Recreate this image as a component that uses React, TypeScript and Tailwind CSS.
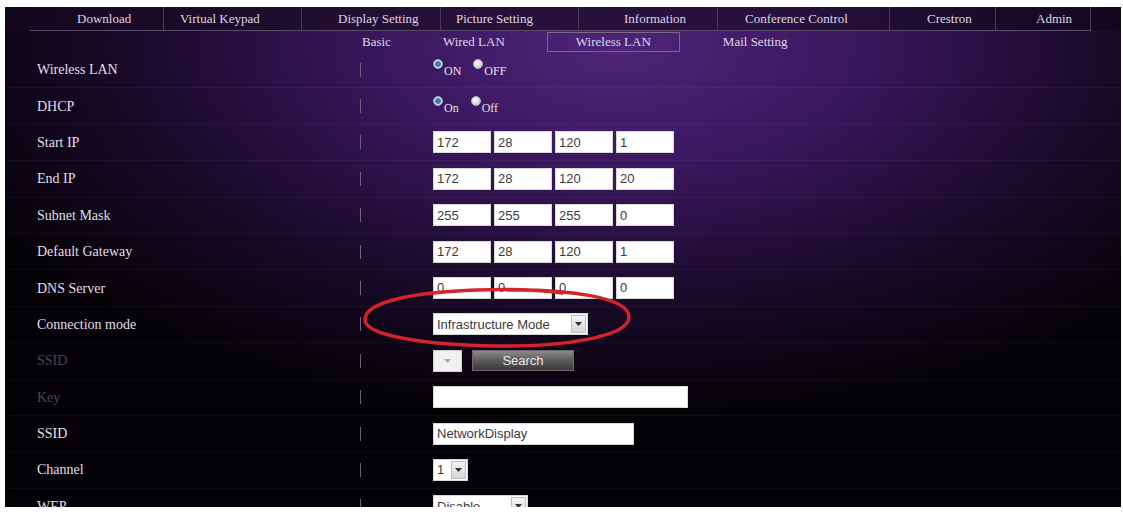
import React from "react";

const serif = { fontFamily: '"Liberation Serif", "Times New Roman", serif' };
const sans = { fontFamily: '"Liberation Sans", Arial, sans-serif' };

const navCells: { label: string; w: string; pl: string }[] = [
  { label: "Download", w: "w-[159px]", pl: "pl-[72px]" },
  { label: "Virtual Keypad", w: "w-[138px]", pl: "pl-[16px]" },
  { label: "Display Setting", w: "w-[139px]", pl: "pl-[36px]" },
  { label: "Picture Setting", w: "w-[138px]", pl: "pl-[15px]" },
  { label: "Information", w: "w-[139px]", pl: "pl-[45px]" },
  { label: "Conference Control", w: "w-[172px]", pl: "pl-[27px]" },
  { label: "Crestron", w: "w-[106px]", pl: "pl-[37px]" },
  { label: "Admin", w: "w-[95px]", pl: "pl-[40px]" },
];

function Radio({ on }: { on: boolean }) {
  return (
    <span
      className={
        on
          ? "inline-block w-[10px] h-[10px] rounded-full border border-[#9ab] bg-[radial-gradient(circle_at_50%_50%,#2d6f8c_0%,#4b8aa6_45%,#cfe0ea_60%,#e8eef2_100%)]"
          : "inline-block w-[10px] h-[10px] rounded-full border border-[#bbb] bg-[radial-gradient(circle_at_40%_35%,#ffffff_0%,#d8d8d8_60%,#b0b0b0_100%)]"
      }
    />
  );
}

function RadioPair({ a, b }: { a: string; b: string }) {
  return (
    <div className="flex items-end gap-[12px] text-[#e6e0ee] text-[12px]" style={serif}>
      <span className="flex items-start gap-[1px]">
        <Radio on />
        <span className="mt-[3px]">{a}</span>
      </span>
      <span className="flex items-start gap-[1px]">
        <Radio on={false} />
        <span className="mt-[3px]">{b}</span>
      </span>
    </div>
  );
}

function TextBox({ value, w }: { value: string; w: string }) {
  return (
    <div
      className={`${w} h-[22px] bg-white border border-[#d8d8d8] flex items-center pl-[3px] text-[13px] text-[#3a3a3a]`}
      style={sans}
    >
      {value}
    </div>
  );
}

function IpBoxes({ parts }: { parts: string[] }) {
  return (
    <div className="flex items-center gap-[3px]">
      {parts.map((p, i) => (
        <TextBox key={i} value={p} w="w-[58px]" />
      ))}
    </div>
  );
}

function Arrow() {
  return (
    <span className="w-[15px] h-[18px] bg-[linear-gradient(#f4f4f4,#d6d6d6)] border border-[#bdbdbd] flex items-center justify-center">
      <svg width="7" height="4" viewBox="0 0 7 4">
        <path d="M0 0 L7 0 L3.5 4 Z" fill="#333" />
      </svg>
    </span>
  );
}

function Select({ value, w }: { value: string; w: string }) {
  return (
    <div
      className={`${w} h-[22px] bg-white border border-[#d8d8d8] flex items-center justify-between pl-[3px] pr-[1px] text-[13px] text-[#3a3a3a]`}
      style={sans}
    >
      <span>{value}</span>
      <Arrow />
    </div>
  );
}

type Row = { label: string; dim?: boolean; field: React.ReactNode };

const rows: Row[] = [
  { label: "Wireless LAN", field: <RadioPair a="ON" b="OFF" /> },
  { label: "DHCP", field: <RadioPair a="On" b="Off" /> },
  { label: "Start IP", field: <IpBoxes parts={["172", "28", "120", "1"]} /> },
  { label: "End IP", field: <IpBoxes parts={["172", "28", "120", "20"]} /> },
  { label: "Subnet Mask", field: <IpBoxes parts={["255", "255", "255", "0"]} /> },
  { label: "Default Gateway", field: <IpBoxes parts={["172", "28", "120", "1"]} /> },
  { label: "DNS Server", field: <IpBoxes parts={["0", "0", "0", "0"]} /> },
  { label: "Connection mode", field: <Select value="Infrastructure Mode" w="w-[155px]" /> },
  {
    label: "SSID",
    dim: true,
    field: (
      <div className="flex items-center gap-[10px]">
        <div className="w-[29px] h-[22px] bg-[#f1f1f1] border border-[#d0d0d0] flex items-center justify-center">
          <svg width="7" height="4" viewBox="0 0 7 4">
            <path d="M0 0 L7 0 L3.5 4 Z" fill="#aaa" />
          </svg>
        </div>
        <div
          className="w-[102px] h-[21px] bg-[linear-gradient(#8a8a8a,#5b5b5b_50%,#3a3a3a)] border border-[#6a6a6a] flex items-center justify-center text-[13px] text-[#e8e8e8]"
          style={sans}
        >
          Search
        </div>
      </div>
    ),
  },
  { label: "Key", dim: true, field: <TextBox value="" w="w-[255px]" /> },
  { label: "SSID", field: <TextBox value="NetworkDisplay" w="w-[201px]" /> },
  { label: "Channel", field: <Select value="1" w="w-[35px]" /> },
  { label: "WEP", field: <Select value="Disable" w="w-[95px]" /> },
];

export default function App() {
  return (
    <div className="w-[1123px] h-[512px] bg-white pt-[7px] pl-[5px] pr-[2px] pb-[5px]">
      <div className="relative w-full h-full overflow-hidden bg-[radial-gradient(ellipse_70%_80%_at_55%_8%,#4f2478_0%,#3a175e_30%,#1a0a2b_62%,#050207_92%)]">
        {/* main menu */}
        <div className="flex h-[23px] items-center bg-[linear-gradient(90deg,#12071c,#261039_40%,#281040_70%,#12071c)] text-[13px] text-[#ddd6e6]" style={serif}>
          {navCells.map((c) => (
            <div key={c.label} className={`${c.w} ${c.pl} h-full flex items-center border-r border-[#4a3a5a] whitespace-nowrap`}>
              {c.label}
            </div>
          ))}
          <div className="flex-1" />
        </div>

        {/* sub tabs */}
        <div className="ml-[25px] mr-[30px] h-[22px] border-t border-[#5a4a6a] text-[13px] text-[#ddd6e6]" style={serif}>
          <div className="flex h-full items-center">
            <span className="ml-[332px]">Basic</span>
            <span className="ml-[52px]">Wired LAN</span>
            <span className="ml-[42px] h-[20px] w-[133px] border border-[#7a6a8a] flex items-center justify-center mt-[1px]">
              Wireless LAN
            </span>
            <span className="ml-[43px]">Mail Setting</span>
          </div>
        </div>

        {/* settings rows */}
        <div>
          {rows.map((r, i) => (
            <div key={i} className="h-[36.4px] flex items-center border-b border-[#ffffff0a]">
              <div
                className={`w-[355px] pl-[32px] text-[14px] whitespace-nowrap ${r.dim ? "text-[#4c4452]" : "text-[#e4dfe9]"}`}
                style={serif}
              >
                {r.label}
              </div>
              <div className="w-[1px] h-[14px] bg-[#6d6575]" />
              <div className="ml-[72px]">{r.field}</div>
            </div>
          ))}
        </div>

        {/* red marker ring around the connection mode */}
        <svg
          className="absolute left-[352px] top-[274px] pointer-events-none"
          width="280"
          height="72"
          viewBox="0 0 280 72"
        >
          <path
            d="M150 9 C 210 8, 272 16, 272 36 C 272 56, 205 66, 140 65 C 70 64, 7 55, 8 38 C 9 20, 60 11, 120 9 C 150 8, 185 9, 205 12"
            fill="none"
            stroke="#d4232c"
            strokeWidth="3.5"
            strokeLinecap="round"
          />
        </svg>
      </div>
    </div>
  );
}
